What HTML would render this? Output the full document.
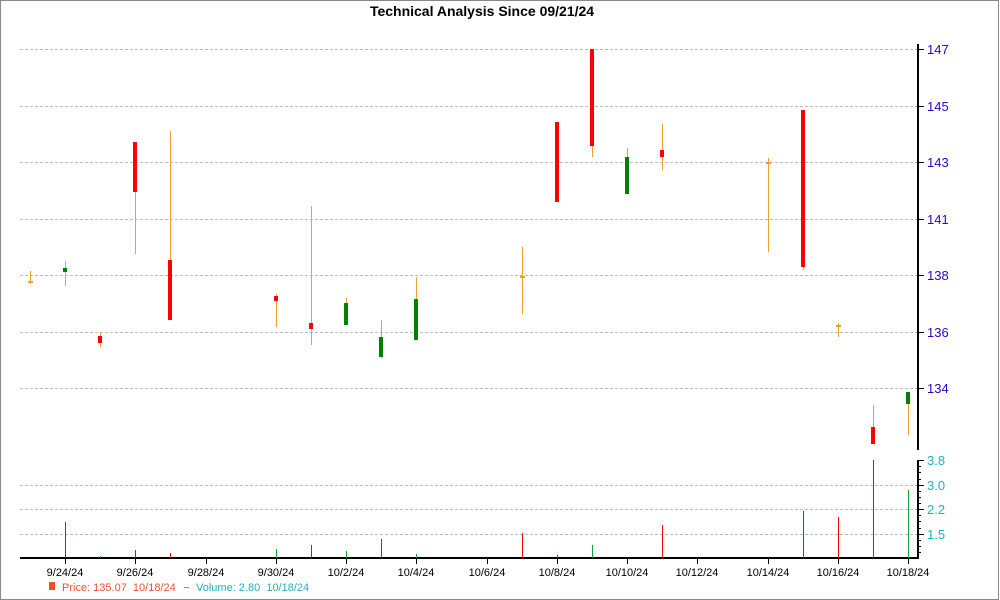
<!DOCTYPE html>
<html><head><meta charset="utf-8"><style>
html,body{margin:0;padding:0;background:#fff}
svg{display:block;font-family:"Liberation Sans",sans-serif}
</style></head><body>
<svg width="1000" height="600" viewBox="0 0 1000 600">
<rect x="0.5" y="0.5" width="998" height="599" fill="#fff" stroke="#888"/>
<text x="482" y="16" text-anchor="middle" font-size="14" font-weight="bold" fill="#000">Technical Analysis Since 09/21/24</text>
<g stroke="#bbb" stroke-dasharray="3,2" stroke-width="1">
<line x1="20" y1="49.5" x2="917" y2="49.5"/>
<line x1="20" y1="106.5" x2="917" y2="106.5"/>
<line x1="20" y1="162.5" x2="917" y2="162.5"/>
<line x1="20" y1="219.5" x2="917" y2="219.5"/>
<line x1="20" y1="275.5" x2="917" y2="275.5"/>
<line x1="20" y1="332.5" x2="917" y2="332.5"/>
<line x1="20" y1="388.5" x2="917" y2="388.5"/>
<line x1="20" y1="485.5" x2="917" y2="485.5"/>
<line x1="20" y1="509.5" x2="917" y2="509.5"/>
<line x1="20" y1="534.5" x2="917" y2="534.5"/>
</g>
<line x1="918" y1="44" x2="918" y2="450" stroke="#000" stroke-width="2"/>
<line x1="918" y1="460" x2="918" y2="559" stroke="#000" stroke-width="2"/>
<line x1="20" y1="558" x2="919" y2="558" stroke="#000" stroke-width="2"/>
<g stroke="#000" stroke-width="1">
<line x1="918" y1="49.5" x2="924" y2="49.5"/><line x1="918" y1="106.5" x2="924" y2="106.5"/>
<line x1="918" y1="162.5" x2="924" y2="162.5"/><line x1="918" y1="219.5" x2="924" y2="219.5"/>
<line x1="918" y1="275.5" x2="924" y2="275.5"/><line x1="918" y1="332.5" x2="924" y2="332.5"/>
<line x1="918" y1="388.5" x2="924" y2="388.5"/>
<line x1="918" y1="460.5" x2="924" y2="460.5"/><line x1="918" y1="485.5" x2="924" y2="485.5"/>
<line x1="918" y1="509.5" x2="924" y2="509.5"/><line x1="918" y1="534.5" x2="924" y2="534.5"/>
<line x1="918" y1="466.5" x2="921" y2="466.5"/><line x1="918" y1="472.5" x2="921" y2="472.5"/><line x1="918" y1="479.5" x2="921" y2="479.5"/>
<line x1="918" y1="491.5" x2="921" y2="491.5"/><line x1="918" y1="497.5" x2="921" y2="497.5"/><line x1="918" y1="503.5" x2="921" y2="503.5"/>
<line x1="918" y1="515.5" x2="921" y2="515.5"/><line x1="918" y1="521.5" x2="921" y2="521.5"/><line x1="918" y1="528.5" x2="921" y2="528.5"/>
<line x1="918" y1="540.5" x2="921" y2="540.5"/><line x1="918" y1="546.5" x2="921" y2="546.5"/><line x1="918" y1="552.5" x2="921" y2="552.5"/>
</g>
<g font-size="13" fill="#3300cc">
<text x="927" y="54">147</text><text x="927" y="111">145</text><text x="927" y="167">143</text>
<text x="927" y="224">141</text><text x="927" y="280">138</text><text x="927" y="337">136</text><text x="927" y="393">134</text>
</g>
<g font-size="13" fill="#20b0c0">
<text x="927" y="465">3.8</text><text x="927" y="490">3.0</text><text x="927" y="514">2.2</text><text x="927" y="539">1.5</text>
</g>
<g stroke="#000" stroke-width="1">
<line x1="65.5" y1="558" x2="65.5" y2="564"/><line x1="135.5" y1="558" x2="135.5" y2="564"/><line x1="206.5" y1="558" x2="206.5" y2="564"/>
<line x1="276.5" y1="558" x2="276.5" y2="564"/><line x1="346.5" y1="558" x2="346.5" y2="564"/><line x1="416.5" y1="558" x2="416.5" y2="564"/>
<line x1="487.5" y1="558" x2="487.5" y2="564"/><line x1="557.5" y1="558" x2="557.5" y2="564"/><line x1="627.5" y1="558" x2="627.5" y2="564"/>
<line x1="697.5" y1="558" x2="697.5" y2="564"/><line x1="768.5" y1="558" x2="768.5" y2="564"/><line x1="838.5" y1="558" x2="838.5" y2="564"/>
<line x1="908.5" y1="558" x2="908.5" y2="564"/>
</g>
<g font-size="11" fill="#000" text-anchor="middle">
<text x="65" y="576">9/24/24</text><text x="135" y="576">9/26/24</text><text x="206" y="576">9/28/24</text>
<text x="276" y="576">9/30/24</text><text x="346" y="576">10/2/24</text><text x="416" y="576">10/4/24</text>
<text x="487" y="576">10/6/24</text><text x="557" y="576">10/8/24</text><text x="627" y="576">10/10/24</text>
<text x="697" y="576">10/12/24</text><text x="768" y="576">10/14/24</text><text x="838" y="576">10/16/24</text>
<text x="908" y="576">10/18/24</text>
</g>
<rect x="49" y="582" width="6" height="8" fill="#f05020"/>
<text x="62" y="591" font-size="11" fill="#f05030" style="white-space:pre">Price: 135.07  10/18/24</text>
<line x1="184" y1="587.5" x2="189" y2="587.5" stroke="#20b0c0"/>
<text x="196" y="591" font-size="11" fill="#20b0c0" style="white-space:pre">Volume: 2.80  10/18/24</text>
<g stroke="#f0a030" stroke-width="1">
<line x1="30.5" y1="271" x2="30.5" y2="284"/><line x1="65.5" y1="261" x2="65.5" y2="286"/>
<line x1="100.5" y1="333" x2="100.5" y2="347"/><line x1="135.5" y1="142" x2="135.5" y2="254"/>
<line x1="170.5" y1="131" x2="170.5" y2="320"/><line x1="276.5" y1="294" x2="276.5" y2="327"/>
<line x1="311.5" y1="206" x2="311.5" y2="345"/><line x1="346.5" y1="298" x2="346.5" y2="325"/>
<line x1="381.5" y1="320" x2="381.5" y2="358"/><line x1="416.5" y1="277" x2="416.5" y2="340"/>
<line x1="522.5" y1="247" x2="522.5" y2="314"/><line x1="592.5" y1="49" x2="592.5" y2="157"/>
<line x1="627.5" y1="148" x2="627.5" y2="194"/><line x1="662.5" y1="124" x2="662.5" y2="170"/>
<line x1="768.5" y1="158" x2="768.5" y2="252"/><line x1="803.5" y1="110" x2="803.5" y2="270"/>
<line x1="838.5" y1="323" x2="838.5" y2="337"/><line x1="873.5" y1="405" x2="873.5" y2="444"/>
<line x1="908.5" y1="392" x2="908.5" y2="435"/>
</g>
<g fill="#f0a030">
<rect x="28" y="281" width="5" height="2"/><rect x="520" y="276" width="5" height="2"/>
<rect x="766" y="162" width="5" height="2"/><rect x="836" y="325" width="5" height="2"/>
</g>
<g fill="#ff0000">
<rect x="98" y="336" width="4" height="7"/><rect x="133" y="142" width="4" height="50"/>
<rect x="168" y="260" width="4" height="60"/><rect x="274" y="296" width="4" height="5"/>
<rect x="309" y="323" width="4" height="6"/><rect x="555" y="122" width="4" height="80"/>
<rect x="590" y="49" width="4" height="97"/><rect x="660" y="150" width="4" height="7"/>
<rect x="801" y="110" width="4" height="157"/><rect x="871" y="427" width="4" height="17"/>
</g>
<g fill="#008000">
<rect x="63" y="268" width="4" height="4"/><rect x="344" y="303" width="4" height="22"/>
<rect x="379" y="337" width="4" height="20"/><rect x="414" y="299" width="4" height="41"/>
<rect x="625" y="157" width="4" height="37"/><rect x="906" y="392" width="4" height="12"/>
</g>
<g stroke="#ff0000" stroke-width="1">
<line x1="65.5" y1="522" x2="65.5" y2="558"/><line x1="135.5" y1="550" x2="135.5" y2="558"/>
<line x1="170.5" y1="553" x2="170.5" y2="558"/><line x1="311.5" y1="545" x2="311.5" y2="558"/>
<line x1="381.5" y1="539" x2="381.5" y2="558"/><line x1="522.5" y1="533" x2="522.5" y2="558"/>
<line x1="557.5" y1="555" x2="557.5" y2="558"/><line x1="662.5" y1="525" x2="662.5" y2="558"/>
<line x1="803.5" y1="511" x2="803.5" y2="558"/><line x1="838.5" y1="517" x2="838.5" y2="558"/>
<line x1="873.5" y1="460" x2="873.5" y2="558"/>
</g>
<g stroke="#10a040" stroke-width="1">
<line x1="100.5" y1="556" x2="100.5" y2="558"/><line x1="276.5" y1="549" x2="276.5" y2="558"/>
<line x1="346.5" y1="551" x2="346.5" y2="558"/><line x1="416.5" y1="554" x2="416.5" y2="558"/>
<line x1="592.5" y1="545" x2="592.5" y2="558"/><line x1="908.5" y1="490" x2="908.5" y2="558"/>
</g>
</svg>
</body></html>
